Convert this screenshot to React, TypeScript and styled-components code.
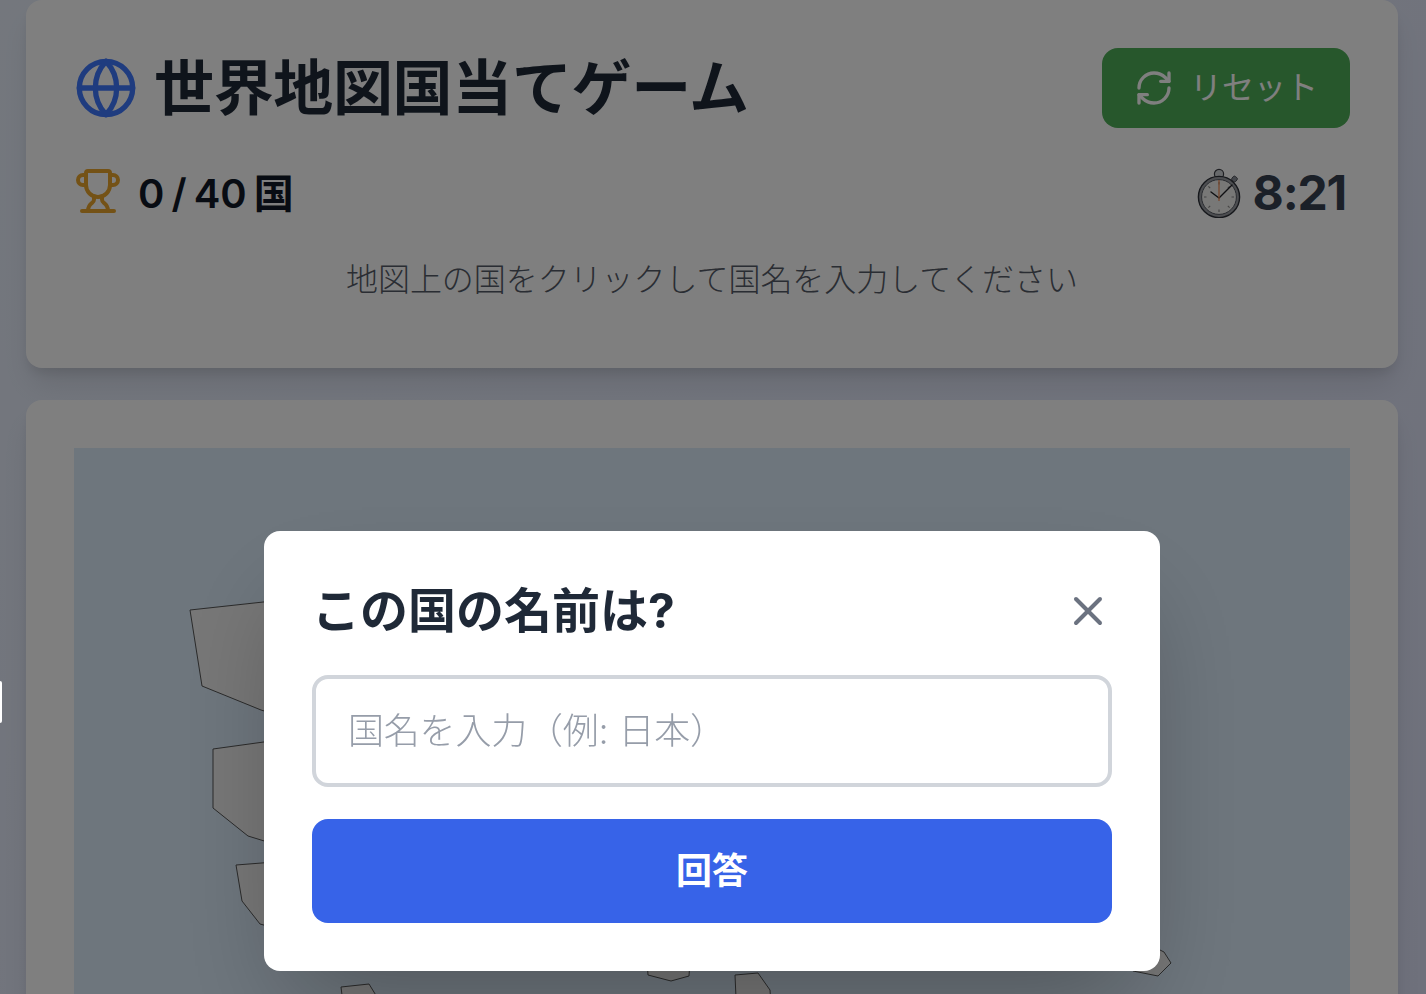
import React from "react";
import styled, { createGlobalStyle } from "styled-components";
import { Globe, RefreshCw, Trophy, X } from "lucide-react";

const Global = createGlobalStyle`
  html, body { margin: 0; padding: 0; height: 100%; overflow: hidden; }
  body { font-family: Inter, "Noto Sans CJK JP", "Noto Sans", sans-serif; }
  * { box-sizing: border-box; }
`;

const Page = styled.div`
  height: 100vh;
  overflow: hidden;
  padding: 0 28px 0 26px;
  display: flex;
  flex-direction: column;
  gap: 32px;
  background: linear-gradient(135deg, #e8effb 0%, #dee2f8 100%);
`;

const Card = styled.section`
  flex: none;
  background: #fff;
  border-radius: 16px;
  padding: 48px;
  box-shadow: 0 20px 30px -6px rgba(0, 0, 0, 0.1), 0 8px 12px -4px rgba(0, 0, 0, 0.1);
`;

const HeaderRow = styled.div`
  display: flex;
  align-items: center;
  justify-content: space-between;
  height: 80px;
`;

const TitleGroup = styled.div`
  display: flex;
  align-items: center;
  gap: 16px;
  color: #3f78ff;
`;

const Title = styled.h1`
  margin: 0;
  font-size: 60px;
  line-height: 80px;
  font-weight: 700;
  letter-spacing: -0.35px;
  color: #1f2937;
`;

const ResetButton = styled.button`
  display: flex;
  align-items: center;
  gap: 16px;
  height: 80px;
  padding: 0 32px;
  border: 0;
  border-radius: 16px;
  background: #4fae58;
  color: #fff;
  font-family: inherit;
  font-size: 32px;
  font-weight: 400;
  line-height: 48px;
`;

const StatsRow = styled.div`
  display: flex;
  align-items: center;
  justify-content: space-between;
  height: 64px;
  margin-top: 33px;
`;

const ScoreGroup = styled.div`
  display: flex;
  align-items: center;
  gap: 16px;
  padding-bottom: 5px;
  color: #e8a42c;
`;

const Score = styled.span`
  font-size: 40px;
  font-weight: 600;
  color: #111827;
  word-spacing: -3px;
`;

const TimerGroup = styled.div`
  display: flex;
  align-items: center;
  gap: 11px;
  padding-right: 4px;
`;

const Time = styled.span`
  font-size: 48px;
  font-weight: 700;
  line-height: 64px;
  letter-spacing: -1.2px;
  color: #374151;
`;

const Hint = styled.p`
  margin: 31px 0 16px;
  text-align: center;
  font-size: 32px;
  line-height: 48px;
  font-weight: 300;
  letter-spacing: -0.05px;
  color: #555b67;
`;

const MapArea = styled.div`
  background: #dcecfb;
  height: 800px;
`;

const MapSvg = styled.svg`
  display: block;
  width: 100%;
  height: 100%;
`;

const Overlay = styled.div`
  position: fixed;
  inset: 0;
  display: flex;
  justify-content: center;
  align-items: flex-start;
  padding: 531px 2px 0 0;
  background: rgba(0, 0, 0, 0.5);
`;

const Modal = styled.div`
  width: 896px;
  height: 440px;
  padding: 48px;
  background: #fff;
  border-radius: 16px;
  display: flex;
  flex-direction: column;
  box-shadow: 0 50px 100px -24px rgba(0, 0, 0, 0.28);
`;

const ModalHead = styled.div`
  display: flex;
  align-items: center;
  justify-content: space-between;
  height: 64px;
  margin-bottom: 32px;
`;

const ModalTitle = styled.h2`
  margin: 0;
  font-size: 48px;
  line-height: 64px;
  font-weight: 700;
  color: #1f2937;
`;

const CloseButton = styled.button`
  display: flex;
  padding: 0;
  border: 0;
  background: none;
  color: #6b7280;
`;

const NameInput = styled.input`
  display: block;
  width: 100%;
  height: 112px;
  padding: 0 32px;
  border: 4px solid #d1d5db;
  border-radius: 16px;
  font-family: inherit;
  font-size: 36px;
  font-weight: 300;
  letter-spacing: -0.2px;
  outline: none;
  &::placeholder { color: #969da9; opacity: 1; }
`;

const AnswerButton = styled.button`
  width: 100%;
  height: 104px;
  margin-top: 32px;
  padding: 0 0 6px;
  border: 0;
  border-radius: 16px;
  background: #3763e8;
  color: #fff;
  font-family: inherit;
  font-size: 36px;
  font-weight: 700;
`;

const EdgeTab = styled.div`
  position: fixed;
  left: 0;
  top: 681px;
  width: 2px;
  height: 42px;
  background: #fff;
  border-radius: 0 2px 2px 0;
`;

const polygons = [
  "190,610 300,598 300,722 261,710 202,686",
  "213,749 300,737 300,852 248,836 213,808",
  "236,865 300,860 300,935 260,924 242,901",
  "341,987 369,984 385,1010 345,1020",
  "647,960 648,975 671,981 689,976 690,960",
  "735,975 758,973 770,990 772,1020 737,1020",
  "1100,940 1160,950 1164,952 1171,963 1158,976 1133,971",
];

const Stopwatch = () => (
  <svg width="46" height="50" viewBox="0 0 46 50" aria-hidden="true">
    <circle cx="23" cy="6" r="4.6" fill="#cfd2d6" stroke="#3c3f46" strokeWidth="1.2" />
    <rect x="20.5" y="9" width="5" height="5" fill="#8b8f96" />
    <rect x="36" y="8.5" width="5" height="5" rx="1.5" transform="rotate(40 38.5 11)" fill="#8a8f98" stroke="#3c3f46" strokeWidth="0.8" />
    <circle cx="23" cy="29" r="20.6" fill="#9a9da3" stroke="#2d3038" strokeWidth="1.4" />
    <circle cx="23" cy="29" r="17.4" fill="#f1f1ef" stroke="#555962" strokeWidth="1" />
    <path
      d="M23 14v2.5M23 41.5v2.5M8 29h2.5M35.5 29H38M12.4 18.4l1.8 1.8M33.6 18.4l-1.8 1.8M12.4 39.6l1.8-1.8M33.6 39.6l-1.8-1.8"
      stroke="#8a8a8a"
      strokeWidth="1.2"
    />
    <path d="M23 30l-8-6M23 30l13-13" stroke="#1e2026" strokeWidth="1.4" strokeLinecap="round" />
    <path d="M23 12v21" stroke="#f08a50" strokeWidth="1.2" />
  </svg>
);

export default function App() {
  return (
    <>
      <Global />
      <Page>
        <Card>
          <HeaderRow>
            <TitleGroup>
              <Globe size={64} />
              <Title>世界地図国当てゲーム</Title>
            </TitleGroup>
            <ResetButton>
              <RefreshCw size={40} />
              リセット
            </ResetButton>
          </HeaderRow>
          <StatsRow>
            <ScoreGroup>
              <Trophy size={48} />
              <Score>0 / 40 国</Score>
            </ScoreGroup>
            <TimerGroup>
              <Stopwatch />
              <Time>8:21</Time>
            </TimerGroup>
          </StatsRow>
          <Hint>地図上の国をクリックして国名を入力してください</Hint>
        </Card>
        <Card>
          <MapArea>
            <MapSvg viewBox="74 448 1276 800" preserveAspectRatio="xMinYMin">
              {polygons.map((p) => (
                <polygon key={p} points={p} fill="#eeeeee" stroke="#555" strokeWidth="1" />
              ))}
            </MapSvg>
          </MapArea>
        </Card>
      </Page>
      <Overlay>
        <Modal>
          <ModalHead>
            <ModalTitle>この国の名前は?</ModalTitle>
            <CloseButton>
              <X size={48} />
            </CloseButton>
          </ModalHead>
          <NameInput placeholder="国名を入力（例: 日本）" />
          <AnswerButton>回答</AnswerButton>
        </Modal>
      </Overlay>
      <EdgeTab />
    </>
  );
}
